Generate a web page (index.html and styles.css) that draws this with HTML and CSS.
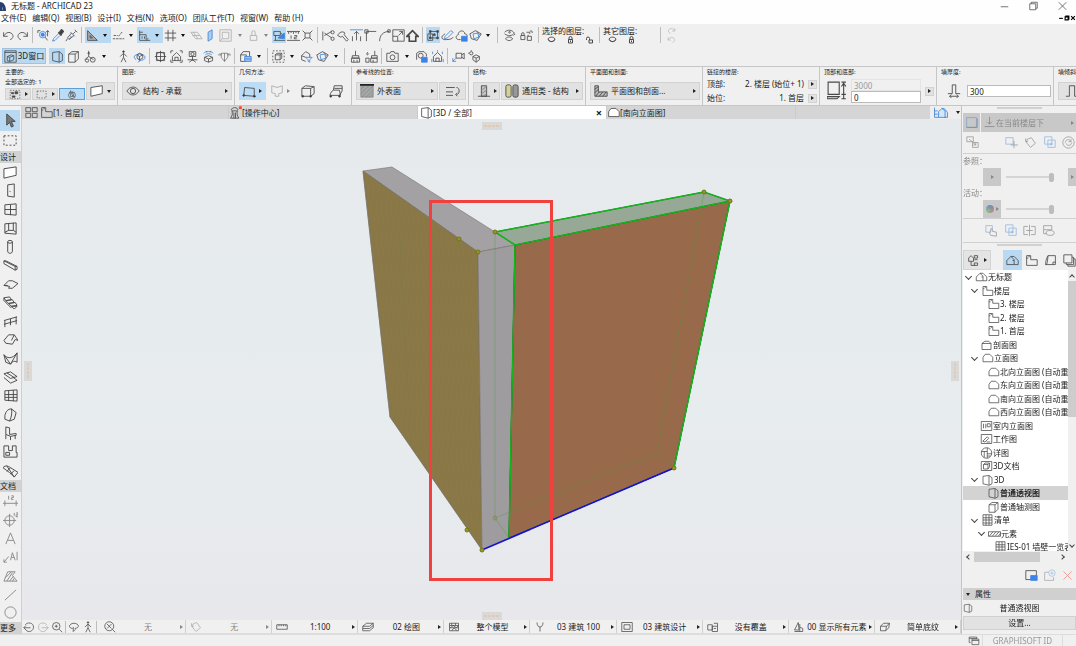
FILE: index.html
```html
<!DOCTYPE html>
<html lang="zh-CN">

<head>
    <meta charset="UTF-8">
    <meta name="viewport" content="width=device-width, initial-scale=1.0">
    <title>无标题 - ARCHICAD 23</title>

    <link rel="stylesheet" href="styles.css">
</head>

<body>
    <!-- Icons -->
    <svg class="sprite" aria-hidden="true">
        <symbol id="undo" viewBox="0 0 16 16"><path d="M2 4v5h5M2 9c2-4 6-6 9-4 4 2 3 7-1 8" /></symbol>
        <symbol id="redo" viewBox="0 0 16 16"><path d="M14 4v5H9M14 9c-2-4-6-6-9-4-4 2-3 7 1 8" /></symbol>
        <symbol id="find" viewBox="0 0 16 16"><circle class="bl" cx="7" cy="7" r="4" /><circle class="bf" cx="7" cy="7" r="2" /><path d="M10 10l3 4M1 2h3M1 2v3M13 2v7M11 4l2-2 2 2" /></symbol>
        <symbol id="pipette" viewBox="0 0 16 16"><path d="M9 4l4 4M10 5l3-4 2 2-3 4z" fill="#333" stroke-width="2" /><path class="bl" d="M9 6L3 12l-1 3 3-1 6-6" /></symbol>
        <symbol id="syringe" viewBox="0 0 16 16"><path d="M12 1l3 3M13 3l-3 3M7 4l5 5M8 5l-5 6 2 2 6-5M3 12l-2 3" /><path class="bl" d="M6 8l2 2-3 2" /></symbol>
        <symbol id="setsquare" viewBox="0 0 16 16"><path d="M2 2v12h12zM5 8v3h3z" fill="#aaa" /></symbol>
        <symbol id="guide" viewBox="0 0 16 16"><path d="M1 12h14M2 8h5M8 9l5-6" stroke-dasharray="3 1" /></symbol>
        <symbol id="track" viewBox="0 0 16 16"><path d="M2 2v12h13M2 7h8v7M5 9v3M8 9v3M12 11v2" /><path d="M2 4h4" /></symbol>
        <symbol id="grid" viewBox="0 0 16 16"><path d="M5 1v14M11 1v14M1 5h14M1 11h14" /></symbol>
        <symbol id="plane" viewBox="0 0 16 16"><path d="M1 4h8l6 8H7zM4 4l6 8M3 8h9" /></symbol>
        <symbol id="vplane" viewBox="0 0 16 16"><path class="bl" d="M5 4l5-3v11l-5 3z" fill="#a9cdf0" /></symbol>
        <symbol id="frame" viewBox="0 0 16 16"><path d="M1 1h14v14H1zM4 4h8v8H4zM1 15l3-3" /></symbol>
        <symbol id="lock" viewBox="0 0 16 16"><path d="M4 8h8v6H4zM6 8V4a2 2 0 0 1 4 0v4" /></symbol>
        <symbol id="suspend" viewBox="0 0 16 16"><path d="M1 3h8v5H1zM3 8v6M1 14h14M9 5l5 3" /><path class="bl" d="M6 11l8-6v7z" fill="#3d86dd" /></symbol>
        <symbol id="ruler" viewBox="0 0 16 16"><path d="M0 3h16M2 3v3M5 3v2M8 3v3M11 3v2M14 3v3M0 14h16M5 8v4M9 8h3v2H9v2h3" /></symbol>
        <symbol id="burst" viewBox="0 0 16 16"><path d="M5 5h6v6H5zM2 2l3 3M14 2l-3 3M2 14l3-3M14 14l-3-3" /></symbol>
        <symbol id="scissors" viewBox="0 0 16 16"><path d="M1 3v11M3 8l9-5M3 5l9 6" /><circle cx="13" cy="4" r="2" /><circle cx="13" cy="12" r="2" /></symbol>
        <symbol id="axe" viewBox="0 0 16 16"><path d="M2 8c2-4 6-6 9-3l-1 2 5 6-2 2-5-6-2 1z" /></symbol>
        <symbol id="align" viewBox="0 0 16 16"><path class="bl" d="M0 1h16" /><path d="M8 3v11M5 6l3-3 3 3M3 9v6M13 9v6" /></symbol>
        <symbol id="corner" viewBox="0 0 16 16"><path d="M3 15V3h12M1 1h4v4H1z" /></symbol>
        <symbol id="arc" viewBox="0 0 16 16"><path d="M2 15C2 8 6 3 14 3M12 1h3v3h-3z" /></symbol>
        <symbol id="stretch" viewBox="0 0 16 16"><path d="M1 1h14v14H1zM1 9h6v6M8 8l5-5M9 3h4v4" /></symbol>
        <symbol id="home" viewBox="0 0 16 16"><path d="M1 9l7-7 7 7h-3v6H4V9z" stroke-width="2" /></symbol>
        <symbol id="group" viewBox="0 0 16 16"><path d="M4 3h9v8H4zM1 6h6v8H1z" /><path d="M3 2h2v2H3zM12 2h2v2h-2zM12 10h2v2h-2zM3 10h2v2H3zM8 6h2v2H8z" fill="#444" /></symbol>
        <symbol id="pencil" viewBox="0 0 16 16"><path class="bl" d="M5 9l7-7 3 2-7 7-4 1z" /><path d="M5 6c-6 3-5 8 2 7 4 0 7-1 8-3" /></symbol>
        <symbol id="cloud" viewBox="0 0 16 16"><path d="M7 13H4c-4-1-3-5 0-6 0-6 8-6 8-1 2 0 3 1 3 3" /><path class="bf" d="M8 9h7v6H8z" /></symbol>
        <symbol id="cube" viewBox="0 0 16 16"><path d="M1 6l7-4 7 4-5 8-7-2z" /><path class="bl" d="M5 6l6-1 1 5-6 2zM9 3l5 5" /></symbol>
        <symbol id="eyes" viewBox="0 0 16 16"><path d="M2 4c4-4 9-3 12 1-3 4-8 4-12 1M3 12c3-3 6-3 9 0-3 3-6 3-9 0M13 8l2-2" /><circle cx="8" cy="4" r="1" /></symbol>
        <symbol id="locks" viewBox="0 0 16 16"><path d="M1 8h5v5H1zM2 8V6a1 1 0 0 1 3 0v2M9 9h5v5H9zM10 9V7M8 4h4v2M12 3a2 2 0 0 1 3 0v2" /></symbol>
        <symbol id="eyelid" viewBox="0 0 16 16"><path d="M1 6c3-5 11-5 14 0-2 7-12 7-14 0zM2 8c4 4 8 4 12 0" stroke-width="2" /></symbol>
        <symbol id="padlock" viewBox="0 0 16 16"><path d="M4 7h8v7H4zM5 7V4a3 3 0 0 1 6 0v3M8 9v3" stroke-width="2" /></symbol>
        <symbol id="unlock" viewBox="0 0 16 16"><path d="M7 8h7v6H7zM8 8V5a3 3 0 0 0-6 0v3" stroke-width="2" /></symbol>
        <symbol id="win3d" viewBox="0 0 16 16"><path d="M1 1h14v14H1zM1 3h14M4 8l5-2 3 1v5l-5 2-3-1zM4 8l3 1v5M7 9l5-2" /></symbol>
        <symbol id="persp" viewBox="0 0 16 16"><path d="M2 3l8-1v13l-8-2zM10 2l4 3v8l-4 2" /></symbol>
        <symbol id="axon" viewBox="0 0 16 16"><path d="M2 5l4-3h8v9l-4 4H2zM2 5h8l4-3M10 5v10" /></symbol>
        <symbol id="gears" viewBox="0 0 16 16"><path d="M7 1v7l-5 4M7 8l6 4" /><circle cx="5" cy="13" r="2" /><circle cx="12" cy="12" r="3" /><circle cx="7" cy="4" r="1" /></symbol>
        <symbol id="walk" viewBox="0 0 16 16"><circle cx="8" cy="2" r="1" fill="#444" /><path d="M8 4v5l3 6M8 9l-3 6M4 8l4-4 4 4" /></symbol>
        <symbol id="orbit" viewBox="0 0 16 16"><path class="bl" d="M4 12C-1 9 2 5 8 5s9 4 5 7l-5 1M6 11l3 2-3 2" /><path d="M5 6l3-2 4 2v4l-4 2-3-2zM5 6l3 2 4-2M8 8v4" /></symbol>
        <symbol id="target" viewBox="0 0 16 16"><path d="M3 3h10v10H3zM8 1v14M1 8h14" /><circle cx="8" cy="8" r="5" /></symbol>
        <symbol id="fithouse" viewBox="0 0 16 16"><path d="M1 4V1h3M12 1h3v3M15 12v3h-3M4 15H1v-3M3 8l5-5 5 5v5H3zM6 13V9h4v4" /></symbol>
        <symbol id="lookat" viewBox="0 0 16 16"><path d="M4 2h8v6H4zM8 8v5M4 15l4-3 4 3M2 12h12" /><circle cx="8" cy="5" r="2" /></symbol>
        <symbol id="sun" viewBox="0 0 16 16"><path class="bl" d="M2 4c3-3 9-3 12 0M4 6c2-2 6-2 8 0M5 1l1 2M11 1l-1 2" /><path d="M3 9l5-2 5 2v4l-5 2-5-2zM3 9l5 2 5-2M8 11v4" /></symbol>
        <symbol id="section" viewBox="0 0 16 16"><path d="M0 6h4M12 6h4M4 4h8v5l-4 5-4-5zM4 6L2 4M12 6l2-2M8 4v10" opacity=".7" /></symbol>
        <symbol id="copy3d" viewBox="0 0 16 16"><path d="M2 6l3-4h8v6M2 6h7v8H2z" /><path class="bl" d="M7 8h8v6H7zM7 11h8" fill="#9cc5f2" /></symbol>
        <symbol id="marq3d" viewBox="0 0 16 16"><path d="M1 1h14v14H1z" stroke-dasharray="2 2" /><path d="M4 6l2-2h6v6l-2 2H4zM4 6h6v6M10 6l2-2" /></symbol>
        <symbol id="filter3d" viewBox="0 0 16 16"><path d="M2 7l5-5 5 3v4M2 7v5l5 2M2 7l5 2" /><path class="bl" d="M7 9h8l-3 3v3l-2-1v-2z" /></symbol>
        <symbol id="brush" viewBox="0 0 16 16"><path d="M8 1v6M4 7h8v3H4zM3 10h10v5H3zM6 12v3M10 12v3" /></symbol>
        <symbol id="brush2" viewBox="0 0 16 16"><path d="M12 1v6M8 7h7v3H8zM7 10h8v5H7zM10 12v3M3 3c-3 4 3 4 0 0M1 10h4v5H1z" /></symbol>
        <symbol id="camera" viewBox="0 0 16 16"><path d="M1 4h4l1-2h4l1 2h4v10H1z" /><circle cx="8" cy="9" r="3" /></symbol>
        <symbol id="camset" viewBox="0 0 16 16"><path d="M2 12V4l3-2h6l3 3v3" /><circle cx="7" cy="7" r="3" /><path class="bf" d="M8 9h7v6H8z" /></symbol>
        <symbol id="energy" viewBox="0 0 16 16"><path d="M3 8l5-5 5 5v6H3zM6 14v-4h4v4" /><path class="bl" d="M2 2v3M14 2v3M8 0v2M1 11v4M15 11v4" /></symbol>
        <symbol id="video" viewBox="0 0 16 16"><path d="M5 4h7v6H5zM12 6l3-2v7l-3-2" /><path class="bl" d="M1 14l4-4M1 10v4h4" /></symbol>
        <symbol id="solids" viewBox="0 0 16 16"><circle cx="4" cy="4" r="2" /><path d="M4 0v1M0 4h1M6 8l4-2 4 2v4l-4 3-4-3zM6 8l4 2 4-2M10 10v5" /></symbol>
        <symbol id="selgrp" viewBox="0 0 16 16"><path d="M1 2h14v12H1z" stroke-dasharray="2 2" /><path d="M3 5h3v2H3zM8 4h4v3H8zM4 10h4v2H4z" fill="#444" /></symbol>
        <symbol id="marquee" viewBox="0 0 16 16"><path d="M1 3h13v10H1z" stroke-dasharray="2 2" /></symbol>
        <symbol id="magnet" viewBox="0 0 16 16"><circle cx="8" cy="9" r="5" /><path d="M6 2l-1 4 5-1M8 9l4 2M6 7h4v4H6z" /></symbol>
        <symbol id="wall" viewBox="0 0 16 16"><path d="M1 4l13-2v9L1 14z" fill="#fff" /></symbol>
        <symbol id="eye" viewBox="0 0 16 16"><path d="M1 8c4-6 10-6 14 0-4 6-10 6-14 0z" /><circle cx="8" cy="8" r="3" /></symbol>
        <symbol id="geo1" viewBox="0 0 16 16"><path d="M2 13l1-9 11 1v9zM1 13h2M13 14h3" /><circle cx="2" cy="13" r="1" fill="#333" /><circle cx="14" cy="14" r="1" fill="#333" /></symbol>
        <symbol id="geo2" viewBox="0 0 16 16"><path d="M2 10V2l6 2 6-2v8l-4 1v3H6v-3z" /></symbol>
        <symbol id="geo3" viewBox="0 0 16 16"><path d="M1 5l4-3 10 1v8l-4 3H1zM1 5h10l4-2M11 5v9" /><circle cx="2" cy="14" r="1" fill="#333" /><circle cx="11" cy="14" r="1" fill="#333" /></symbol>
        <symbol id="geo4" viewBox="0 0 16 16"><path d="M1 13c1-3 2-5 4-6h7l1 6zM5 7l1-5h9v6l-3 5M6 5h9" /><circle cx="2" cy="14" r="1" fill="#333" /><circle cx="12" cy="14" r="1" fill="#333" /></symbol>
        <symbol id="hatch" viewBox="0 0 16 16"><path d="M1 1h14v14H1z" fill="#a4a8a8" stroke="#888" /><path d="M1 6l5-5M1 11L11 1M2 15L15 2M7 15l8-8M11 15l4-4" stroke="#8a8a8a" /><path d="M0 1h16" stroke="#222" stroke-width="2" /></symbol>
        <symbol id="flip" viewBox="0 0 16 16"><path d="M0 4h10M0 9h8M0 13h8" /><path d="M12 4c4 0 4 8 0 8M13 10l-2 2 2 2" /></symbol>
        <symbol id="wallsec" viewBox="0 0 16 16"><path d="M5 2h6v12H5z" fill="#c4c4c4" /><path d="M1 14h14" /><path d="M5 7l6-4M5 11l6-4M7 14l4-3" stroke="#888" /></symbol>
        <symbol id="vert" viewBox="0 0 16 16"><path d="M1 14h4V2h6v12h4" /></symbol>
        <symbol id="bricks" viewBox="0 0 16 16"><rect x="1" y="1" width="6" height="14" rx="2" fill="#d5d19b" /><rect x="9" y="1" width="6" height="14" rx="2" fill="#999" /></symbol>
        <symbol id="plansec" viewBox="0 0 16 16"><path d="M1 2h4v7h10v5H1z" fill="#bbb" /><path d="M1 6l4-3M1 10l4-4M2 14l4-5M6 14l4-5M10 14l4-5" /></symbol>
        <symbol id="height" viewBox="0 0 18 18"><path d="M1 1h10v11H1zM13 1h4M15 2v14M13 5l2-3 2 3M13 12h4M13 16h4" /><path d="M0 14h11l-2 2H0z" fill="#bbb" /></symbol>
        <symbol id="thick" viewBox="0 0 16 16"><path d="M1 11h5V1h4v10h5M3 14h10M5 12l-2 2 2 2M11 12l2 2-2 2" /></symbol>
        <symbol id="quad" viewBox="0 0 16 16"><path d="M1 2h6v5H1zM9 2h6v5H9zM1 9h6v5H1zM9 9h6v5H9z" /></symbol>
        <symbol id="plan" viewBox="0 0 16 16"><path d="M2 2h5v5h8v7H2zM2 5h2M5 2v2" /></symbol>
        <symbol id="action" viewBox="0 0 16 16"><path d="M3 5c0-4 8-4 8 0M3 6h8M4 6v5l-2 4h10l-2-4V6M6 8v7M8 8v7" /><circle cx="14" cy="2" r="2" fill="#f34b34" stroke="none" /></symbol>
        <symbol id="elev" viewBox="0 0 16 16"><path d="M2 13V7l3-4h6l4 4v6z" fill="#fff" /></symbol>
        <symbol id="city" viewBox="0 0 18 16"><path class="bl" d="M1 2v12h5M1 6h4M1 10h4M6 14V7l4-4 4 3v8zM10 3h3l4 5v6h-4" fill="#d3e6fa" /></symbol>
        <symbol id="arrow" viewBox="0 0 16 16"><path d="M4 1v12l3-3 2 5 2-1-2-5h4z" fill="#777" /></symbol>
        <symbol id="door" viewBox="0 0 16 16"><path d="M5 2l7-1v14l-7-1zM7 9h1" /></symbol>
        <symbol id="window" viewBox="0 0 16 16"><path d="M2 3l12-1v12L2 13zM8 3v11M2 8h12" /></symbol>
        <symbol id="skylight" viewBox="0 0 16 16"><path d="M2 3l12-1v12L2 13zM6 3v7M2 12l4-2h5v-8M11 10l3 2" /></symbol>
        <symbol id="column" viewBox="0 0 16 16"><path d="M5 3v10c0 3 5 3 5 0V3" /><ellipse cx="7.500" cy="3" rx="2.500" ry="1.500" /></symbol>
        <symbol id="beam" viewBox="0 0 16 16"><path d="M1 3v3l12 7 2-1v-3L3 3zM1 3l12 6v4M13 9h2" /></symbol>
        <symbol id="slab" viewBox="0 0 16 16"><path d="M1 9l5-5h4l6 3-6 5H6l1-2zM1 9l4 0" /></symbol>
        <symbol id="stair" viewBox="0 0 16 16"><path d="M1 3l6-1 2 3-6 1zM3 6l7-1 2 3-6 1zM6 9l7-1 2 3-6 1zM9 12l6 0-3 3zM1 3v3l8 8" /></symbol>
        <symbol id="railing" viewBox="0 0 16 16"><path d="M1 7l14-4M1 11l14-4M2 7v7M8 5v7M14 3v8" /></symbol>
        <symbol id="roof" viewBox="0 0 16 16"><path d="M1 9l5-6h6l4 6-3-1-3 5-7-1zM12 3l-3 6" /></symbol>
        <symbol id="shell" viewBox="0 0 16 16"><path d="M1 4c3 4 9 5 14-2v10c-3-2-5-1-7 2zM1 4l2 8M8 14l7-12M3 12l5 2" /></symbol>
        <symbol id="mesh" viewBox="0 0 16 16"><path d="M1 4l7-2 7 5-7 2zM1 8l7 6 7-3-4-3M4 3l8 5" /></symbol>
        <symbol id="curtain" viewBox="0 0 16 16"><path d="M2 3l13-1v12L2 13zM6 3v11M11 2v12M2 7h13M2 10h13" /></symbol>
        <symbol id="morph" viewBox="0 0 16 16"><path d="M2 9c1-4 3-7 7-7l5 4-2 7-5 2-5-2zM9 2c1 4 0 9-2 13" /></symbol>
        <symbol id="chair" viewBox="0 0 16 16"><path d="M3 1l4 1v7l7-1v2l-6 1-5-2zM3 9v5M8 11v4M13 10v4" /></symbol>
        <symbol id="zone" viewBox="0 0 16 16"><path d="M1 2h5v5h4V2h4v7h1v5H1z" /><path d="M3 9h4v3H3z" /></symbol>
        <symbol id="site" viewBox="0 0 16 16"><path d="M0 5c3-3 5-2 8 0l8 5-4 5c-3-4-7-6-12-10zM4 3l8 12M8 5l-4 4M12 8l-4 4" /></symbol>
        <symbol id="dim" viewBox="0 0 16 16"><path d="M0 11h16M2 8v6M14 8v6M6 3v4M9 3h2v2H9v2h2" /></symbol>
        <symbol id="level" viewBox="0 0 16 16"><circle cx="7" cy="9" r="5" /><path d="M0 9h14M7 2v14M12 1v3M14 1h2v2h-2v2h2" /></symbol>
        <symbol id="leader" viewBox="0 0 16 16"><path d="M1 11v3h3M1 14l5-6M8 12l2-8 3 8M9 9h3M15 3v9" /></symbol>
        <symbol id="letter" viewBox="0 0 16 16"><path d="M3 14L8 2l5 12M5 10h6" /></symbol>
        <symbol id="fill" viewBox="0 0 16 16"><path d="M1 14l4-10h8l-3 4 5 6zM4 14l6-9M7 14l4-5M10 14l2-3M3 10l6-6" /></symbol>
        <symbol id="line" viewBox="0 0 16 16"><path d="M2 14L14 3" /></symbol>
        <symbol id="circle" viewBox="0 0 16 16"><circle cx="8" cy="8" r="6" /></symbol>
        <symbol id="square" viewBox="0 0 16 16"><path class="bl" d="M2 2h12v12H2z" /><path d="M2 14h13V3" /></symbol>
        <symbol id="below" viewBox="0 0 16 16"><path d="M8 1v9M5 7l3 3 3-3M2 13h12" /></symbol>
        <symbol id="swap" viewBox="0 0 16 16"><path d="M1 1h8v6H1zM8 8h7v6H8zM4 4l8 7M9 11h3V8" /></symbol>
        <symbol id="move" viewBox="0 0 16 16"><path class="bl" d="M1 2h9v8H1z" /><path d="M11 6v9M7 11h9" /></symbol>
        <symbol id="rotate" viewBox="0 0 16 16"><path d="M4 4l5-2 5 7-6 5-5-6zM2 3v4h3" /></symbol>
        <symbol id="layers2" viewBox="0 0 16 16"><path class="bl" d="M2 1h9v9H2z" /><path class="bl" d="M6 5h9v9H6zM8 10h4M10 8v4" /></symbol>
        <symbol id="reset" viewBox="0 0 16 16"><circle cx="8" cy="8" r="7" /><path d="M4 8c0-4 6-5 7-1M12 8c0 4-6 5-7 1M11 4v3H8" /></symbol>
        <symbol id="hand" viewBox="0 0 16 16"><path class="bl" d="M1 2h8v4M1 2v8h4" /><path d="M7 14l-2-4 2 0V6h2v3l5 1v5z" /></symbol>
        <symbol id="mirror" viewBox="0 0 16 16"><path d="M1 3h5M1 3v10h5M10 3h5v10h-5M8 1v14M4 8h8" /></symbol>
        <symbol id="blobs" viewBox="0 0 16 16"><path d="M2 2h10v5H2zM2 7v5h4" /><ellipse cx="10" cy="11" rx="5" ry="3" /></symbol>
        <symbol id="navmode" viewBox="0 0 16 16"><path d="M2 5l3-3 3 3v4H2zM5 9v5h5M9 7h4M9 11h4v3H9zM9 2h4v3H9z" /></symbol>
        <symbol id="project" viewBox="0 0 16 16"><path d="M1 13V8l5-5 4 4v6zM6 3h4l5 5v5h-5M10 8h-2" /></symbol>
        <symbol id="layout" viewBox="0 0 16 16"><path d="M2 13c0-4 1-8 3-11h9v11zM11 13v-3h3M2 13c2 0 2-2 3-11" /></symbol>
        <symbol id="publish" viewBox="0 0 16 16"><path d="M1 1h10v10H1zM4 11v2h9V4h-2M6 13v2h9V6h-2" /></symbol>
        <symbol id="box" viewBox="0 0 16 16"><path d="M2 6h12v8H2zM2 6l4-3h5l3 3" /></symbol>
        <symbol id="interior" viewBox="0 0 16 16"><path d="M1 2h14v12H1zM4 5v6M7 5v6M9 5h4v4H9z" /></symbol>
        <symbol id="sheet" viewBox="0 0 16 16"><path d="M1 2h14v12H1zM3 11l6-6 2 2-5 5zM8 12h5" /></symbol>
        <symbol id="detail" viewBox="0 0 16 16"><circle cx="8" cy="8" r="7" /><path d="M1 6h8v9M9 1v5M5 6v8M9 9h6M9 12h4" /></symbol>
        <symbol id="doc3d" viewBox="0 0 16 16"><path d="M1 2h14v12H1zM4 6l2-2h6v5l-2 3H4zM4 6h6v6M10 6l2-2" /></symbol>
        <symbol id="table" viewBox="0 0 16 16"><path d="M2 1h12v14H2zM2 5h12M2 8h12M2 12h12M6 1v14M10 1v14" /></symbol>
        <symbol id="element" viewBox="0 0 16 16"><path d="M0 5h16v6H0zM1 11l5-6M5 11l5-6M9 11l5-6M13 11l3-4" /></symbol>
        <symbol id="savev" viewBox="0 0 16 16"><path d="M1 2h13v11H1z" /><path class="bf" d="M7 8h8v6H7z" /></symbol>
        <symbol id="newf" viewBox="0 0 16 16"><path d="M7 4H2v10h11v-4" /><circle class="bl" cx="11" cy="5" r="4" /><path class="bl" d="M11 3v4M9 5h4" /></symbol>
        <symbol id="close" viewBox="0 0 16 16"><path d="M3 3l10 10M13 3L3 13" /></symbol>
        <symbol id="restore" viewBox="0 0 16 16"><path d="M3 5h8v8H3zM5 5V3h8v8h-2" /></symbol>
        <symbol id="mini" viewBox="0 0 16 16"><path d="M3 9h10" /></symbol>
        <symbol id="back" viewBox="0 0 16 16"><path d="M3 5c3-4 11-3 11 3s-7 8-10 4M1 9h9M4 6L1 9l3 3" /></symbol>
        <symbol id="forward" viewBox="0 0 16 16"><path d="M13 5C10 1 2 2 2 8s7 8 10 4M15 9H6M12 6l3 3-3 3" /></symbol>
        <symbol id="zoomin" viewBox="0 0 16 16"><circle cx="7" cy="7" r="5" /><path d="M11 11l4 4M5 7h4M7 5v4" /></symbol>
        <symbol id="lasso" viewBox="0 0 16 16"><path d="M6 10C-1 9 2 3 8 3s9 6 1 7M7 8v6l3-3" /></symbol>
        <symbol id="fit" viewBox="0 0 16 16"><circle cx="7" cy="7" r="6" /><path d="M11 11l4 4M4 4l6 6M10 4l-6 6" /></symbol>
        <symbol id="scale" viewBox="0 0 16 16"><path d="M1 5h14v6H1zM4 5v2M7 5v2M10 5v2M13 5v2" /></symbol>
        <symbol id="layers" viewBox="0 0 16 16"><path d="M1 7l5-4h9l-5 4zM1 10h9l5-4M1 13h9l5-4M1 7v6M15 3v6" /></symbol>
        <symbol id="pens" viewBox="0 0 16 16"><path d="M2 3h12v10H2zM2 6h12M2 9h12M5 3v3M10 3v3M3 9l4-3 4 3 3-3M5 13l3-4 4 4" /></symbol>
        <symbol id="fork" viewBox="0 0 16 16"><path d="M4 2c0 8 8 8 8 0M8 8v6" /></symbol>
        <symbol id="modelv" viewBox="0 0 16 16"><path d="M1 2h14v12H1zM4 5h8v6H4z" /></symbol>
        <symbol id="override" viewBox="0 0 16 16"><path d="M1 5h6v7H1zM7 7h7v7H7zM9 3h5v4M9 10h3" /></symbol>
        <symbol id="reno" viewBox="0 0 16 16"><path d="M2 12L7 2l1 10zM9 8l4 2v4H2M9 4v10" /></symbol>
        <symbol id="solid" viewBox="0 0 16 16"><path d="M2 7l4-4h8l-1 6-4 4H2zM2 7h8l4-4M10 7l-1 6" /></symbol>
        <symbol id="cascade" viewBox="0 0 16 16"><path d="M5 6h10v8H5zM5 8h10M3 11H1V3h11v3M1 5h11" /></symbol>
    </svg>

    <header class="titlebar">
        <svg class="logo" viewBox="0 0 8 10"><path d="M0 10V1c4 0 6 4 6 9M3 10c0-2 0-3-1-4" /></svg>
        <h1>无标题 - ARCHICAD 23</h1>
        <div class="window-buttons">
            <button aria-label="最小化"><svg><use href="#mini" /></svg></button>
            <button aria-label="还原"><svg><use href="#restore" /></svg></button>
            <button aria-label="关闭"><svg><use href="#close" /></svg></button>
        </div>
    </header>

    <nav class="menubar">
        <a href="#">文件(E)</a>
        <a href="#">编辑(Q)</a>
        <a href="#">视图(B)</a>
        <a href="#">设计(I)</a>
        <a href="#">文档(N)</a>
        <a href="#">选项(O)</a>
        <a href="#">团队工作(T)</a>
        <a href="#">视窗(W)</a>
        <a href="#">帮助 (H)</a>
        <div class="doc-buttons">
            <button aria-label="最小化文档"><svg><use href="#mini" /></svg></button>
            <button aria-label="还原文档"><svg><use href="#restore" /></svg></button>
            <button aria-label="关闭文档"><svg><use href="#close" /></svg></button>
        </div>
    </nav>

    <div class="toolbar">
        <button aria-label="撤销"><svg><use href="#undo" /></svg></button>
        <button aria-label="重做"><svg><use href="#redo" /></svg></button>
        <span class="sep"></span>
        <button aria-label="查找并选择"><svg><use href="#find" /></svg></button>
        <button aria-label="拾取参数"><svg><use href="#pipette" /></svg></button>
        <button aria-label="注入参数"><svg><use href="#syringe" /></svg></button>
        <span class="sep"></span>
        <button class="on" aria-label="辅助线"><svg><use href="#setsquare" /></svg></button>
        <button class="drop on" aria-label="辅助线选项"></button>
        <button aria-label="捕捉参考线"><svg><use href="#guide" /></svg></button>
        <button class="drop" aria-label="参考线选项"></button>
        <button class="on" aria-label="追踪器"><svg><use href="#track" /></svg></button>
        <button class="drop on" aria-label="追踪器选项"></button>
        <button aria-label="网格捕捉"><svg><use href="#grid" /></svg></button>
        <button class="drop" aria-label="网格选项"></button>
        <button class="off" aria-label="编辑平面"><svg><use href="#plane" /></svg></button>
        <button aria-label="垂直平面"><svg><use href="#vplane" /></svg></button>
        <button class="wide off" aria-label="平面显示"><svg><use href="#frame" /></svg></button>
        <button class="drop off" aria-label="平面显示选项"></button>
        <button class="off" aria-label="锁定"><svg><use href="#lock" /></svg></button>
        <button class="drop off" aria-label="锁定选项"></button>
        <button class="on" aria-label="暂停组合"><svg><use href="#suspend" /></svg></button>
        <button aria-label="测量"><svg><use href="#ruler" /></svg></button>
        <button aria-label="分解"><svg><use href="#burst" /></svg></button>
        <span class="sep"></span>
        <button aria-label="修剪"><svg><use href="#scissors" /></svg></button>
        <button aria-label="分割"><svg><use href="#axe" /></svg></button>
        <button aria-label="调整"><svg><use href="#align" /></svg></button>
        <button aria-label="相交"><svg><use href="#corner" /></svg></button>
        <button aria-label="圆角"><svg><use href="#arc" /></svg></button>
        <button aria-label="调整大小"><svg><use href="#stretch" /></svg></button>
        <button aria-label="修剪到屋顶"><svg><use href="#home" /></svg></button>
        <span class="sep"></span>
        <button class="on" aria-label="组合"><svg><use href="#group" /></svg></button>
        <button aria-label="标注"><svg><use href="#pencil" /></svg></button>
        <button aria-label="云线"><svg><use href="#cloud" /></svg></button>
        <button aria-label="3D 剖切"><svg><use href="#cube" /></svg></button>
        <button class="drop" aria-label="剖切选项"></button>
        <span class="sep"></span>
        <button class="wide" aria-label="切换图层显示"><svg><use href="#eyes" /></svg></button>
        <button class="wide" aria-label="切换图层锁定"><svg><use href="#locks" /></svg></button>
        <span class="sep"></span>
        <div class="layer-tools">
            <span>选择的图层:</span>
            <div>
                <button aria-label="隐藏所选图层"><svg><use href="#eyelid" /></svg></button>
                <button aria-label="锁定所选图层"><svg><use href="#padlock" /></svg></button>
                <button aria-label="解锁所选图层"><svg><use href="#unlock" /></svg></button>
            </div>
        </div>
        <span class="sep"></span>
        <div class="layer-tools">
            <span>其它图层:</span>
            <div>
                <button aria-label="隐藏其它图层"><svg><use href="#eyelid" /></svg></button>
                <button aria-label="锁定其它图层"><svg><use href="#padlock" /></svg></button>
            </div>
        </div>
        <span class="sep"></span>
        <div class="layer-undo">
            <button aria-label="重做图层"><svg><use href="#redo" /></svg></button>
            <button aria-label="撤销图层"><svg><use href="#undo" /></svg></button>
        </div>
    </div>

    <div class="toolbar toolbar-3d">
        <button class="window-3d on"><svg><use href="#win3d" /></svg>3D窗口</button>
        <button class="on" aria-label="透视"><svg><use href="#persp" /></svg></button>
        <button aria-label="轴测"><svg><use href="#axon" /></svg></button>
        <button class="wide" aria-label="3D 投影设置"><svg><use href="#gears" /></svg></button>
        <button class="drop" aria-label="投影选项"></button>
        <span class="sep blank"></span>
        <button aria-label="浏览"><svg><use href="#walk" /></svg></button>
        <button aria-label="环绕"><svg><use href="#orbit" /></svg></button>
        <span class="sep"></span>
        <button aria-label="目标"><svg><use href="#target" /></svg></button>
        <button aria-label="适合窗口"><svg><use href="#fithouse" /></svg></button>
        <button aria-label="看向"><svg><use href="#lookat" /></svg></button>
        <button aria-label="日照"><svg><use href="#sun" /></svg></button>
        <button aria-label="截面"><svg><use href="#section" /></svg></button>
        <span class="sep"></span>
        <button aria-label="复制3D"><svg><use href="#copy3d" /></svg></button>
        <button class="drop" aria-label="复制选项"></button>
        <span class="sep"></span>
        <button aria-label="选取框"><svg><use href="#marq3d" /></svg></button>
        <button class="drop" aria-label="选取框选项"></button>
        <button aria-label="过滤"><svg><use href="#filter3d" /></svg></button>
        <button aria-label="剖切"><svg><use href="#cube" /></svg></button>
        <button class="drop" aria-label="剖切更多"></button>
        <span class="sep"></span>
        <button aria-label="材质"><svg><use href="#brush" /></svg></button>
        <button aria-label="表面"><svg><use href="#brush2" /></svg></button>
        <span class="sep"></span>
        <button class="wide" aria-label="照片渲染"><svg><use href="#camera" /></svg></button>
        <button class="drop" aria-label="渲染选项"></button>
        <button aria-label="渲染设置"><svg><use href="#camset" /></svg></button>
        <button aria-label="能量"><svg><use href="#energy" /></svg></button>
        <span class="sep"></span>
        <button aria-label="漫游"><svg><use href="#video" /></svg></button>
        <button aria-label="日光研究"><svg><use href="#solids" /></svg></button>
    </div>

    <section class="infobox">
        <div class="info">
            <h2>主要的:</h2>
            <div class="main-grid">
                <p>全部选定的: 1</p>
                <button aria-label="选择组"><svg><use href="#selgrp" /></svg><i class="tri"></i></button>
                <button aria-label="选取框模式"><svg><use href="#marquee" /></svg><i class="tri"></i></button>
                <button class="on" aria-label="磁性"><svg><use href="#magnet" /></svg></button>
                <button class="wall-button" aria-label="墙"><svg><use href="#wall" /></svg><i class="tri down"></i></button>
            </div>
        </div>
        <div class="info">
            <h2>图层:</h2>
            <div class="info-row">
                <button class="grow"><svg><use href="#eye" /></svg><span>结构 - 承载</span><i class="tri"></i></button>
            </div>
        </div>
        <div class="info">
            <h2>几何方法:</h2>
            <div class="info-row flat">
                <button class="grow on" aria-label="直墙"><svg><use href="#geo1" /></svg><i class="tri"></i></button>
                <button class="grow off" aria-label="多边墙"><svg><use href="#geo2" /></svg><i class="tri"></i></button>
                <button class="grow" aria-label="梯形墙"><svg><use href="#geo3" /></svg></button>
                <button class="grow" aria-label="曲面墙"><svg><use href="#geo4" /></svg></button>
            </div>
        </div>
        <div class="info">
            <h2>参考线的位置:</h2>
            <div class="info-row">
                <button class="grow"><svg><use href="#hatch" /></svg><span>外表面</span><i class="tri"></i></button>
                <button class="side" aria-label="翻转"><svg><use href="#flip" /></svg></button>
            </div>
        </div>
        <div class="info">
            <h2>结构:</h2>
            <div class="info-row">
                <button class="side" aria-label="墙结构"><svg><use href="#wallsec" /></svg><i class="tri"></i></button>
                <button class="grow"><svg><use href="#bricks" /></svg><span>通用类 - 结构</span><i class="tri"></i></button>
            </div>
        </div>
        <div class="info">
            <h2>平面图和剖面:</h2>
            <div class="info-row">
                <button class="grow"><svg><use href="#plansec" /></svg><span>平面图和剖面...</span><i class="tri"></i></button>
            </div>
        </div>
        <div class="info">
            <h2>链接的楼层:</h2>
            <dl class="stories">
                <div><dt>顶部:</dt><dd>2. 楼层 (始位+ 1)</dd><button class="mini" aria-label="顶部楼层"><i class="tri"></i></button></div>
                <div><dt>始位:</dt><dd>1. 首层</dd><button class="mini" aria-label="始位楼层"><i class="tri"></i></button></div>
            </dl>
        </div>
        <div class="info">
            <h2>顶部和底部:</h2>
            <div class="info-row heights">
                <svg><use href="#height" /></svg>
                <div>
                    <input type="text" value="3000" aria-label="顶部" disabled>
                    <input type="text" value="0" aria-label="底部">
                </div>
                <button class="mini" aria-label="高度选项"><i class="tri"></i></button>
            </div>
        </div>
        <div class="info">
            <h2><label for="thickness">墙厚度:</label></h2>
            <div class="info-row thickness">
                <svg><use href="#thick" /></svg>
                <input type="text" id="thickness" value="300">
            </div>
        </div>
        <div class="info">
            <h2>墙倾斜:</h2>
            <div class="info-row">
                <button class="side" aria-label="垂直"><svg><use href="#vert" /></svg></button>
            </div>
        </div>
    </section>

    <main>
        <aside class="toolbox">
            <div class="tools pick">
                <button class="on" aria-label="箭头"><svg><use href="#arrow" /></svg></button>
                <button aria-label="选取框工具"><svg><use href="#marquee" /></svg></button>
            </div>
            <h2>设计</h2>
            <div class="tools design">
                <button aria-label="墙工具"><svg><use href="#wall" /></svg></button>
                <button aria-label="门"><svg><use href="#door" /></svg></button>
                <button aria-label="窗"><svg><use href="#window" /></svg></button>
                <button aria-label="天窗"><svg><use href="#skylight" /></svg></button>
                <button aria-label="柱"><svg><use href="#column" /></svg></button>
                <button aria-label="梁"><svg><use href="#beam" /></svg></button>
                <button aria-label="板"><svg><use href="#slab" /></svg></button>
                <button aria-label="楼梯"><svg><use href="#stair" /></svg></button>
                <button aria-label="栏杆"><svg><use href="#railing" /></svg></button>
                <button aria-label="屋顶"><svg><use href="#roof" /></svg></button>
                <button aria-label="壳体"><svg><use href="#shell" /></svg></button>
                <button aria-label="网面"><svg><use href="#mesh" /></svg></button>
                <button aria-label="幕墙"><svg><use href="#curtain" /></svg></button>
                <button aria-label="变形体"><svg><use href="#morph" /></svg></button>
                <button aria-label="对象"><svg><use href="#chair" /></svg></button>
                <button aria-label="区域"><svg><use href="#zone" /></svg></button>
                <button aria-label="场地"><svg><use href="#site" /></svg></button>
            </div>
            <h2>文档</h2>
            <div class="tools docs">
                <button aria-label="标注尺寸"><svg><use href="#dim" /></svg></button>
                <button aria-label="标高"><svg><use href="#level" /></svg></button>
                <button aria-label="文本"><svg><use href="#letter" /></svg></button>
                <button aria-label="标签"><svg><use href="#leader" /></svg></button>
                <button aria-label="填充"><svg><use href="#fill" /></svg></button>
                <button aria-label="直线"><svg><use href="#line" /></svg></button>
                <button aria-label="圆"><svg><use href="#circle" /></svg></button>
            </div>
            <h2>更多</h2>
        </aside>

        <div class="workspace">
            <div class="tabs">
                <button class="overview" aria-label="标签概览"><svg><use href="#quad" /></svg></button>
                <button class="tab"><svg><use href="#plan" /></svg>[1. 首层]</button>
                <button class="tab"><svg><use href="#action" /></svg>[操作中心]</button>
                <button class="tab active"><svg><use href="#persp" /></svg>[3D / 全部]<b>×</b></button>
                <button class="tab"><svg><use href="#elev" /></svg>[南向立面图]</button>
                <button class="popup" aria-label="弹出式导航器"><svg><use href="#city" /></svg><i class="tri down"></i></button>
            </div>

            <div class="viewport">
                <svg class="model" viewBox="22 119 939 501">
                    <defs>
                        <pattern id="grain" width="23" height="5" patternUnits="userSpaceOnUse">
                            <path d="M0 1h9M12 3h8" stroke="#7c5236" stroke-width="1" opacity=".08" />
                        </pattern>
                        <pattern id="grainv" width="5" height="31" patternUnits="userSpaceOnUse">
                            <path d="M1 0v14M4 12v17" stroke="#6f5f36" stroke-width="1" opacity=".06" />
                        </pattern>
                    </defs>

                    <!-- left wall -->
                    <g stroke="#77736a" stroke-width=".6">
                        <path d="M363 171l29-4 103 65 20 13-37 7z" fill="#a3a1a3" />
                        <path d="M363 171l115 81 4 298-92-133z" fill="#8a7847" />
                        <path d="M363 171l115 81 4 298-92-133z" fill="url(#grainv)" />
                        <path d="M478 252l37-7-6 293-27 12z" fill="#9e9c9e" />
                    </g>

                    <!-- right wall -->
                    <path d="M515 245l215-44-56 267-165 70z" fill="#986a4b" />
                    <path d="M515 245l215-44-56 267-165 70z" fill="url(#grain)" />
                    <path d="M495 232l209-40 26 9-215 44z" fill="#98a896" />
                    <g fill="none" stroke="#4c9a3c" stroke-width=".7" opacity=".5">
                        <path d="M495 232v286l162-65 47-261M657 453l17 15M495 518l14 20" />
                        <path d="M400 235l8 165" opacity=".3" />
                    </g>
                    <path d="M495 232l209-40 26 9-215 44zM515 245l-6 293M730 201l-56 267" class="edge" />
                    <path d="M482 550l192-82" class="baseline" />

                    <g class="nodes">
                        <circle cx="459" cy="239" r="2" />
                        <circle cx="478" cy="252" r="2" />
                        <circle cx="495" cy="232" r="2" />
                        <circle cx="704" cy="192" r="2" />
                        <circle cx="730" cy="201" r="2" />
                        <circle cx="674" cy="468" r="2" />
                        <circle cx="482" cy="550" r="2" />
                        <circle cx="467" cy="530" r="2" />
                        <circle cx="495" cy="518" r="2" opacity=".4" />
                    </g>
                    <rect x="430.500" y="201.500" width="121" height="378" class="mark" />

                    <!-- palette docking handles -->
                    <g class="handles">
                        <path d="M482 126h20M482 616h20M28 361v20M955 361v20" class="grip" />
                        <path d="M484 126h16M484 616h16M28 363v16M955 363v16" class="dots" />
                    </g>
                </svg>
            </div>

            <footer class="quickbar">
                <div class="view-nav">
                    <button aria-label="上一视图"><svg><use href="#back" /></svg></button>
                    <button class="off" aria-label="下一视图"><svg><use href="#forward" /></svg></button>
                    <button aria-label="放大"><svg><use href="#zoomin" /></svg></button>
                    <span class="sep"></span>
                    <button aria-label="环绕视图"><svg><use href="#lasso" /></svg></button>
                    <button aria-label="步行"><svg><use href="#walk" /></svg></button>
                    <span class="sep"></span>
                </div>
                <button class="option off"><svg class="dark"><use href="#fit" /></svg><span>无</span><i class="tri"></i></button>
                <button class="option off"><svg><use href="#rotate" /></svg><span>无</span><i class="tri"></i></button>
                <button class="option"><svg><use href="#scale" /></svg><span>1:100</span><i class="tri"></i></button>
                <button class="option"><svg><use href="#layers" /></svg><span>02 绘图</span><i class="tri"></i></button>
                <button class="option"><svg><use href="#pens" /></svg><span>整个模型</span><i class="tri"></i></button>
                <button class="option"><svg><use href="#fork" /></svg><span>03 建筑 100</span><i class="tri"></i></button>
                <button class="option"><svg><use href="#modelv" /></svg><span>03 建筑设计</span><i class="tri"></i></button>
                <button class="option"><svg><use href="#override" /></svg><span>没有覆盖</span><i class="tri"></i></button>
                <button class="option"><svg><use href="#reno" /></svg><span>00 显示所有元素</span><i class="tri"></i></button>
                <button class="option"><svg><use href="#solid" /></svg><span>简单底纹</span><i class="tri"></i></button>
            </footer>
        </div>

        <aside class="palettes">
            <div class="grabber"></div>
            <section class="trace">
                <div class="trace-head">
                    <button aria-label="描绘"><svg><use href="#square" /></svg></button>
                    <button class="grow"><svg><use href="#below" /></svg><span>在当前楼层下</span><i class="tri"></i></button>
                </div>
                <div class="trace-icons">
                    <button class="first" aria-label="切换"><svg><use href="#swap" /></svg></button>
                    <button aria-label="移动参照"><svg><use href="#move" /></svg></button>
                    <button aria-label="旋转参照"><svg><use href="#rotate" /></svg></button>
                    <button aria-label="复位参照"><svg><use href="#layers2" /></svg></button>
                    <button aria-label="重建参照"><svg><use href="#reset" /></svg></button>
                </div>
                <label for="refRange">参照：</label>
                <div class="slider-row">
                    <button class="swatch" aria-label="参照颜色"><i class="tri"></i></button>
                    <input type="range" id="refRange" value="100" disabled>
                    <button class="more" aria-label="参照更多"><i class="tri"></i></button>
                </div>
                <label for="activeRange">活动：</label>
                <div class="slider-row">
                    <button class="swatch" aria-label="活动颜色"><i class="wheel"></i><i class="tri"></i></button>
                    <input type="range" id="activeRange" value="100" disabled>
                </div>
                <div class="trace-icons bottom">
                    <button aria-label="拖动"><svg><use href="#hand" /></svg></button>
                    <button aria-label="叠加"><svg><use href="#layers2" /></svg></button>
                    <button aria-label="分隔"><svg><use href="#mirror" /></svg></button>
                    <button aria-label="对比"><svg><use href="#blobs" /></svg></button>
                </div>
            </section>

            <div class="grabber"></div>
            <div class="nav-tabs">
                <button class="mode" aria-label="导航器模式"><svg><use href="#navmode" /></svg><i class="tri"></i></button>
                <button class="on" aria-label="项目树状图"><svg><use href="#project" /></svg></button>
                <button aria-label="视图映射"><svg><use href="#plan" /></svg></button>
                <button aria-label="图册"><svg><use href="#layout" /></svg></button>
                <button aria-label="发布器"><svg><use href="#publish" /></svg></button>
            </div>

            <div class="tree-wrap">
                <ul class="tree">
                    <li class="open"><svg><use href="#project" /></svg>无标题</li>
                    <li class="l1 open"><svg><use href="#plan" /></svg>楼层</li>
                    <li class="l2"><svg><use href="#plan" /></svg>3. 楼层</li>
                    <li class="l2"><svg><use href="#plan" /></svg>2. 楼层</li>
                    <li class="l2"><svg><use href="#plan" /></svg>1. 首层</li>
                    <li class="l1"><svg><use href="#box" /></svg>剖面图</li>
                    <li class="l1 open"><svg><use href="#elev" /></svg>立面图</li>
                    <li class="l2"><svg><use href="#elev" /></svg>北向立面图 (自动重</li>
                    <li class="l2"><svg><use href="#elev" /></svg>东向立面图 (自动重</li>
                    <li class="l2"><svg><use href="#elev" /></svg>南向立面图 (自动重</li>
                    <li class="l2"><svg><use href="#elev" /></svg>西向立面图 (自动重</li>
                    <li class="l1"><svg><use href="#interior" /></svg>室内立面图</li>
                    <li class="l1"><svg><use href="#sheet" /></svg>工作图</li>
                    <li class="l1"><svg><use href="#detail" /></svg>详图</li>
                    <li class="l1"><svg><use href="#doc3d" /></svg>3D文档</li>
                    <li class="l1 open"><svg><use href="#persp" /></svg>3D</li>
                    <li class="l2 selected"><svg><use href="#persp" /></svg>普通透视图</li>
                    <li class="l2"><svg><use href="#axon" /></svg>普通轴测图</li>
                    <li class="l1 open"><svg><use href="#table" /></svg>清单</li>
                    <li class="l2 open"><svg><use href="#element" /></svg>元素</li>
                    <li class="l3"><svg><use href="#table" /></svg>IES-01 墙壁一览表</li>
                </ul>
                <div class="vscroll"><i class="chev up"></i><span></span><i class="chev"></i></div>
            </div>
            <div class="hscroll"><i class="chev left"></i><span></span><i class="chev right"></i></div>

            <div class="nav-actions">
                <button aria-label="保存视图"><svg><use href="#savev" /></svg></button>
                <button class="off" aria-label="新建文件夹"><svg><use href="#newf" /></svg></button>
                <button class="delete" aria-label="删除"><svg><use href="#close" /></svg></button>
            </div>
            <h2><i class="tri down"></i>属性</h2>
            <div class="property"><svg><use href="#persp" /></svg><span>普通透视图</span></div>
            <button class="settings">设置...</button>
        </aside>
    </main>

    <footer class="bottombar">
        <button aria-label="窗口列表"><svg><use href="#cascade" /></svg></button>
        <span>GRAPHISOFT ID</span>
    </footer>
</body>

</html>
```
FILE: styles.css
```css
* {
    box-sizing: border-box;
}

body {
    font-family: "Noto Sans", "Noto Sans CJK SC", sans-serif;
    font-size: 8px;
    line-height: 12px;
    color: #222;
    display: flex;
    flex-direction: column;
    height: 100vh;
    margin: 0;
    overflow: hidden;
    background-color: #f0f0f1;
}

h1,
h2,
p,
ul,
dl,
dd {
    font-size: inherit;
    font-weight: normal;
    margin: 0;
    padding: 0;
}

button {
    display: flex;
    align-items: center;
    justify-content: center;
    flex: none;
    font: inherit;
    color: inherit;
    background: none;
    border: 0;
    padding: 0;
    white-space: nowrap;
    cursor: pointer;
}

input {
    font: inherit;
    color: inherit;
    min-width: 0;
    margin: 0;
}

svg {
    flex: none;
    width: 14px;
    height: 14px;
    fill: none;
    stroke: #484848;
}

.sprite {
    position: absolute;
    width: 0;
    height: 0;
}

.bl {
    stroke: #3d82d4;
}

.bf {
    fill: #3d82e8;
    stroke: #3d82e8;
}

.on {
    background-color: #b9d9f2;
}

.off {
    color: #888;
}

.off svg {
    opacity: 0.4;
}

.off svg.dark {
    opacity: 1;
}

.grow {
    flex: 1;
    min-width: 0;
}

.sep {
    flex: none;
    width: 1px;
    height: 16px;
    margin: 0 3px;
    background-color: #bdbdbd;
}

.sep.blank {
    background: none;
}

/* Arrows */
.tri {
    flex: none;
    border: 2px solid transparent;
    border-left: 3px solid currentColor;
    border-right: 0;
}

.tri.down {
    border: 2px solid transparent;
    border-top: 3px solid currentColor;
    border-bottom: 0;
}

/* Title and menu */
.titlebar,
.menubar {
    display: flex;
    align-items: center;
    flex: none;
    height: 12px;
    background-color: #fefefe;
}

.logo {
    width: 8px;
    height: 10px;
    margin-right: 3px;
    fill: #27406f;
    stroke: none;
}

.window-buttons {
    display: flex;
    gap: 16px;
    margin-left: auto;
    padding-right: 7px;
}

.window-buttons svg {
    width: 13px;
    height: 12px;
}

.menubar {
    gap: 6px;
    padding-left: 1px;
}

.menubar a {
    color: inherit;
    text-decoration: none;
    white-space: nowrap;
}

.doc-buttons {
    display: flex;
    margin-left: auto;
}

.doc-buttons svg {
    width: 6px;
    height: 8px;
    stroke: #000;
    stroke-width: 3;
}

/* Toolbars */
.toolbar {
    display: flex;
    align-items: center;
    flex: none;
    height: 22px;
    padding-left: 1px;
}

.toolbar button {
    width: 14px;
    height: 16px;
}

.toolbar button svg {
    width: 13px;
    height: 13px;
}

.toolbar .wide {
    width: 17px;
}

.toolbar .drop {
    width: 12px;
}

.drop::after {
    content: "";
    border: 2px solid transparent;
    border-top: 3px solid #111;
    border-bottom: 0;
}

.drop.off::after {
    border-top-color: #888;
}

.layer-tools {
    width: 54px;
}

.layer-tools span {
    display: block;
    line-height: 10px;
}

.layer-tools div {
    display: flex;
}

.toolbar .layer-tools button {
    width: 19px;
    height: 8px;
}

.toolbar .layer-tools svg {
    width: 9px;
    height: 8px;
}

.toolbar .layer-undo button {
    height: 9px;
}

.toolbar .layer-undo svg {
    width: 9px;
    height: 9px;
    opacity: 0.4;
}

.toolbar-3d {
    height: 20px;
    padding-left: 2px;
}

.toolbar-3d button {
    width: 16px;
}

.toolbar-3d .window-3d {
    width: 44px;
    gap: 1px;
    margin-right: 3px;
    border: 1px solid #9dc4e4;
}

.toolbar-3d .sep {
    margin: 0 2px;
}

/* Info box */
.infobox {
    display: flex;
    flex: none;
    height: 40px;
    padding-left: 1px;
    overflow: hidden;
    border-top: 1px solid #c6c6c6;
    border-bottom: 1px solid #c6c6c6;
}

.info {
    display: flex;
    flex-direction: column;
    flex: 0 0 117px;
    padding: 0 2px 0 4px;
    border-right: 1px solid #c6c6c6;
}

.info h2,
.info p {
    font-size: 6px;
    line-height: 10px;
    white-space: nowrap;
}

.info-row {
    display: flex;
    align-items: center;
    flex: 1;
    gap: 1px;
}

.info button {
    height: 18px;
    gap: 3px;
    padding: 0 3px;
    background-color: #e2e2e2;
    border: 1px solid #d2d2d2;
}

.info button span {
    flex: 1;
    min-width: 0;
    text-align: left;
    overflow: hidden;
}

.info .flat button {
    border-color: transparent;
    background-color: transparent;
}

.info button.on,
.info .flat .on {
    background-color: #bcdcf5;
}

.info .side {
    width: 27px;
}

.main-grid {
    display: grid;
    grid-template-columns: 26px 26px 26px 1fr;
    grid-template-rows: 11px 12px;
    gap: 0 1px;
}

.main-grid p {
    grid-column: 1 / 4;
}

.main-grid button {
    height: 12px;
}

.main-grid svg {
    height: 11px;
}

.main-grid .on {
    border-color: #5a9fd8;
}

.info .wall-button {
    grid-area: 1 / 4 / 3 / 5;
    height: 18px;
    align-self: end;
}

.wall-button svg {
    height: 14px;
}

.stories {
    display: flex;
    flex-direction: column;
    gap: 2px;
    padding-top: 1px;
}

.stories div {
    display: flex;
    align-items: center;
    gap: 4px;
    line-height: 12px;
}

.stories dd {
    flex: 1;
    text-align: right;
    white-space: nowrap;
}

.info .mini {
    width: 9px;
    height: 9px;
    padding: 0;
}

.info input {
    display: block;
    width: 100%;
    height: 12px;
    padding: 0 2px;
    line-height: 10px;
    background-color: #fff;
    border: 1px solid #bbb;
}

.info input:disabled {
    color: #999;
    background-color: #f0f0f1;
    border-color: #e4e4e4;
}

.heights {
    gap: 4px;
    padding-left: 3px;
}

.heights div {
    flex: 1;
}

.heights svg {
    width: 20px;
    height: 20px;
}

.thickness {
    gap: 6px;
    padding-left: 6px;
}

/* Main area */
main {
    display: flex;
    flex: 1;
    min-height: 0;
}

.toolbox {
    display: flex;
    flex-direction: column;
    flex: none;
    width: 22px;
    padding-top: 4px;
    border-right: 1px solid #cfcfcf;
}

.toolbox h2 {
    flex: none;
    height: 12px;
    background-color: #d2d2d2;
    overflow: hidden;
}

.tools {
    display: flex;
    flex-direction: column;
}

.tools button {
    flex: 1;
    width: 20px;
    min-height: 0;
}

.tools svg {
    width: 15px;
    height: 15px;
}

.pick {
    flex: none;
    height: 41px;
}

.design {
    flex: 17;
}

.docs {
    flex: 7;
}

.docs svg {
    stroke: #8a8a8a;
}

.workspace {
    display: flex;
    flex-direction: column;
    flex: 1;
    min-width: 0;
}

.tabs {
    display: flex;
    flex: none;
    height: 13px;
    background-color: #d5d5d5;
}

.tabs svg {
    width: 13px;
    height: 13px;
}

.overview {
    width: 18px;
}

.tab {
    flex: 0 1 189px;
    justify-content: flex-start;
    border-right: 1px solid #cbcbcb;
}

.tab.active {
    background-color: #fff;
    padding-left: 2px;
}

.tab b {
    font-size: 11px;
    margin-left: auto;
    padding-right: 4px;
}

.popup {
    width: 31px;
    gap: 6px;
    margin-left: auto;
    background-color: #eee;
}

.popup svg {
    width: 18px;
}

.viewport {
    flex: 1;
    min-height: 0;
    background: linear-gradient(#e6eaed, #e7ecee 60%, #e8e8ec);
}

.model {
    display: block;
    width: 100%;
    height: 100%;
}

.edge {
    stroke: #12b51b;
    stroke-width: 1.5;
}

.baseline {
    stroke: #1414cf;
    stroke-width: 1.5;
}

.nodes {
    fill: #8d9b2c;
    stroke: #77730c;
}

.mark {
    stroke: #f0413f;
    stroke-width: 3;
}

.grip {
    stroke: #dbd9d8;
    stroke-width: 8;
}

.dots {
    stroke: #e2bd9c;
    stroke-dasharray: 3 1;
}

.quickbar {
    display: flex;
    flex: none;
    height: 14px;
    background-color: #f0f0f1;
    border-bottom: 1px solid #ddd;
}

.quickbar svg {
    width: 12px;
    height: 12px;
}

.view-nav {
    display: flex;
    align-items: center;
    flex: none;
    width: 78px;
}

.view-nav button {
    width: 14px;
}

.view-nav .sep {
    height: 12px;
    margin: 0 1px;
}

.option {
    flex: 1;
    min-width: 0;
    padding: 0 2px 0 4px;
    border-right: 1px solid #d0d0d0;
}

.option span {
    flex: 1;
    min-width: 0;
}

/* Palettes */
.palettes {
    display: flex;
    flex-direction: column;
    flex: none;
    width: 115px;
    padding-left: 1px;
    overflow: hidden;
    border-left: 1px solid #c4c4c4;
}

.palettes svg {
    width: 13px;
    height: 13px;
}

.grabber {
    flex: none;
    width: 45px;
    height: 2px;
    margin: 1px auto 4px;
    background-color: #d0d0d0;
}

.trace {
    color: #888;
    border-bottom: 1px solid #d0d0d0;
}

.trace svg {
    opacity: 0.5;
}

.trace-head {
    display: flex;
    gap: 1px;
    height: 19px;
}

.trace-head button {
    padding: 0 2px;
    background-color: #c8c8c8;
}

.trace-head span {
    flex: 1;
    text-align: left;
}

.trace-icons {
    display: flex;
    align-items: center;
    height: 22px;
    border-bottom: 1px solid #d0d0d0;
}

.trace-icons button {
    width: 19px;
}

.trace-icons .first {
    margin-right: 20px;
}

.trace-icons.bottom {
    height: 24px;
    padding-left: 19px;
    border-top: 1px solid #d0d0d0;
    border-bottom: 0;
}

.trace label {
    display: block;
    height: 14px;
    line-height: 14px;
}

.slider-row {
    display: flex;
    align-items: center;
    height: 18px;
    padding-left: 20px;
}

.slider-row button {
    height: 18px;
    background-color: #c8c8c8;
}

.swatch {
    width: 18px;
    gap: 2px;
}

.wheel {
    width: 8px;
    height: 8px;
    border-radius: 50%;
    background: conic-gradient(#6c8fc0, #b88, #8b8, #6c8fc0);
}

.slider-row input {
    appearance: none;
    width: 48px;
    height: 10px;
    margin-left: 5px;
    background: linear-gradient(#d4d4d4, #d4d4d4) center / 100% 2px no-repeat;
}

.slider-row input::-webkit-slider-thumb {
    appearance: none;
    width: 5px;
    height: 9px;
    border-radius: 2px;
    background-color: #bdbdbd;
}

.slider-row .more {
    width: 8px;
    margin-left: auto;
}

.nav-tabs {
    display: flex;
    flex: none;
    height: 20px;
}

.nav-tabs button {
    width: 19px;
}

.nav-tabs .mode {
    width: 28px;
    gap: 4px;
    margin-right: 12px;
    background-color: #e4e4e4;
    border: 1px solid #d4d4d4;
}

.tree-wrap {
    display: flex;
    flex: 1;
    min-height: 0;
    background-color: #fff;
}

.tree {
    flex: 1;
    min-width: 0;
    overflow: hidden;
    list-style: none;
}

.tree li {
    display: flex;
    align-items: center;
    height: 14px;
    padding-left: 11px;
    white-space: nowrap;
}

.tree li:nth-child(even) {
    height: 13px;
}

.tree svg {
    height: 12px;
}

.tree .l1 {
    padding-left: 17px;
}

.tree .l2 {
    padding-left: 24px;
}

.tree .l3 {
    padding-left: 31px;
}

.tree .open::before,
.chev {
    content: "";
    flex: none;
    width: 4px;
    height: 4px;
    border: solid #444;
    border-width: 0 1px 1px 0;
    transform: rotate(45deg);
}

.tree .open::before {
    margin: 0 4px 2px -8px;
}

.tree .selected {
    font-weight: bold;
    background-color: #d3d3d3;
}

.vscroll {
    display: flex;
    flex-direction: column;
    align-items: center;
    flex: none;
    width: 8px;
    padding: 5px 0 4px;
    background-color: #f0f0f1;
}

.vscroll span {
    width: 8px;
    height: 50%;
    margin: 2px 0 auto;
    background-color: #cdcdcd;
}

.chev.up {
    transform: rotate(225deg);
}

.chev.left {
    transform: rotate(135deg);
}

.chev.right {
    transform: rotate(-45deg);
}

.hscroll {
    display: flex;
    align-items: center;
    flex: none;
    height: 11px;
    padding: 0 12px 0 4px;
}

.hscroll span {
    width: 66px;
    height: 10px;
    margin: 0 auto 0 3px;
    background-color: #cdcdcd;
}

.nav-actions {
    display: flex;
    align-items: center;
    justify-content: flex-end;
    flex: none;
    height: 26px;
}

.nav-actions button {
    width: 18px;
}

.delete svg {
    stroke: #f08c86;
}

.palettes h2 {
    display: flex;
    align-items: center;
    flex: none;
    gap: 5px;
    height: 12px;
    padding-left: 3px;
    background-color: #d0d0d0;
}

.property {
    display: flex;
    align-items: center;
    flex: none;
    height: 16px;
    padding-right: 10px;
}

.property svg {
    width: 10px;
    height: 10px;
}

.property span {
    flex: 1;
    text-align: center;
}

.settings {
    height: 14px;
    margin-bottom: 4px;
    background-color: #e2e2e2;
    border: 1px solid #d0d0d0;
}

.bottombar {
    display: flex;
    align-items: center;
    justify-content: flex-end;
    flex: none;
    height: 12px;
    padding-right: 13px;
    color: #999;
    border-top: 1px solid #ddd;
}

.bottombar button {
    width: 16px;
}

.bottombar svg {
    width: 12px;
    height: 11px;
}

.bottombar span {
    padding: 0 10px;
    border-left: 1px solid #ddd;
    border-right: 1px solid #ddd;
}
```
